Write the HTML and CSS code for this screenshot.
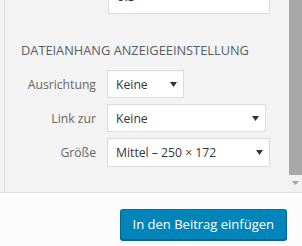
FILE: index.html
```html
<!DOCTYPE html>
<html lang="de">
<head>
    <meta charset="UTF-8">
    <meta name="viewport" content="width=device-width, initial-scale=1.0">
    <title>Dateianhang Anzeigeeinstellung</title>
    <link rel="stylesheet" href="styles.css">
</head>
<body>

    <!-- Sidebar -->
    <div class="frame">
        <div class="sidebar">
            <div class="sidebar-content">
                <div class="text-input">0.5</div>

                <h2>Dateianhang Anzeigeeinstellung</h2>

                <div class="setting">
                    <span class="name">Ausrichtung</span>
                    <div class="select select-small">
                        <span>Keine</span>
                        <svg class="arrow" width="7" height="5" viewBox="0 0 7 5"><path d="M0 0h7L3.5 5z"/></svg>
                    </div>
                </div>

                <div class="setting">
                    <span class="name">Link zur</span>
                    <div class="select select-link">
                        <span>Keine</span>
                        <svg class="arrow" width="7" height="5" viewBox="0 0 7 5"><path d="M0 0h7L3.5 5z"/></svg>
                    </div>
                </div>

                <div class="setting">
                    <span class="name">Größe</span>
                    <div class="select select-size">
                        <span>Mittel – 250 × 172</span>
                        <svg class="arrow" width="7" height="5" viewBox="0 0 7 5"><path d="M0 0h7L3.5 5z"/></svg>
                    </div>
                </div>
            </div>

            <div class="scrollbar">
                <div class="thumb"></div>
                <div class="track">
                    <svg width="7" height="4" viewBox="0 0 7 4"><path d="M0 0h7L3.5 4z"/></svg>
                </div>
            </div>
        </div>
    </div>

    <!-- Toolbar -->
    <div class="toolbar">
        <button class="button-primary">In den Beitrag einfügen</button>
    </div>

</body>
</html>
```

FILE: styles.css
```css
body, html {
    margin: 0;
    padding: 0;
    height: 100%;
    font-family: "Open Sans", "Noto Sans", sans-serif;
    background-color: #fcfcfc;
    overflow: hidden;
}

/* Sidebar */
.frame {
    height: 192px;
    background-color: #f3f3f3;
    border-bottom: 1px solid #dddddd;
    padding-left: 4px;
}

.sidebar {
    display: flex;
    height: 100%;
    border-left: 1px solid #dddddd;
}

.sidebar-content {
    flex: 1;
    padding-left: 16px;
    overflow: hidden;
}

.text-input {
    box-sizing: border-box;
    height: 30px;
    width: 162px;
    margin: -16px 0 0 87px;
    padding: 0 8px;
    line-height: 22px;
    background-color: #fff;
    border: 1px solid #dddddd;
    font-size: 13px;
    color: #32373c;
}

h2 {
    margin: 27px 0 11px;
    font-size: 12.8px;
    font-weight: normal;
    line-height: 18px;
    text-transform: uppercase;
    color: #555d66;
}

/* Settings rows */
.setting {
    display: flex;
    align-items: center;
    margin-bottom: 6px;
}

.setting .name {
    width: 75px;
    margin-right: 11px;
    text-align: right;
    font-size: 12.2px;
    color: #666;
}

.select {
    box-sizing: border-box;
    display: flex;
    align-items: center;
    justify-content: space-between;
    height: 28px;
    padding: 0 6px 0 8px;
    background-color: #fff;
    border: 1px solid #dddddd;
    box-shadow: inset 0 1px 2px rgba(0, 0, 0, 0.04);
    font-size: 12.2px;
    color: #32373c;
}

.select .arrow {
    fill: #333;
}

.select-small {
    width: 77px;
}

.select-link {
    width: 159px;
}

.select-size {
    width: 163px;
    height: 29px;
}

/* Scrollbar */
.scrollbar {
    width: 13px;
    display: flex;
    flex-direction: column;
}

.thumb {
    height: 175px;
    background-color: #a8a8a8;
}

.track {
    flex: 1;
    background-color: #f1f1f1;
    display: flex;
    justify-content: center;
    padding-top: 6px;
}

.track svg {
    fill: #a3a3a3;
}

/* Toolbar */
.toolbar {
    display: flex;
    justify-content: flex-end;
    padding: 16px 15px 0 0;
}

.button-primary {
    height: 31px;
    padding: 0 12px 2px;
    background-color: #0085ba;
    border: 1px solid #0073aa;
    border-color: #0073aa #006799 #006799;
    border-radius: 3px;
    box-shadow: 0 1px 0 #006799;
    font-family: "Open Sans", "Noto Sans", sans-serif;
    font-size: 13px;
    color: #fff;
    cursor: pointer;
}
```
